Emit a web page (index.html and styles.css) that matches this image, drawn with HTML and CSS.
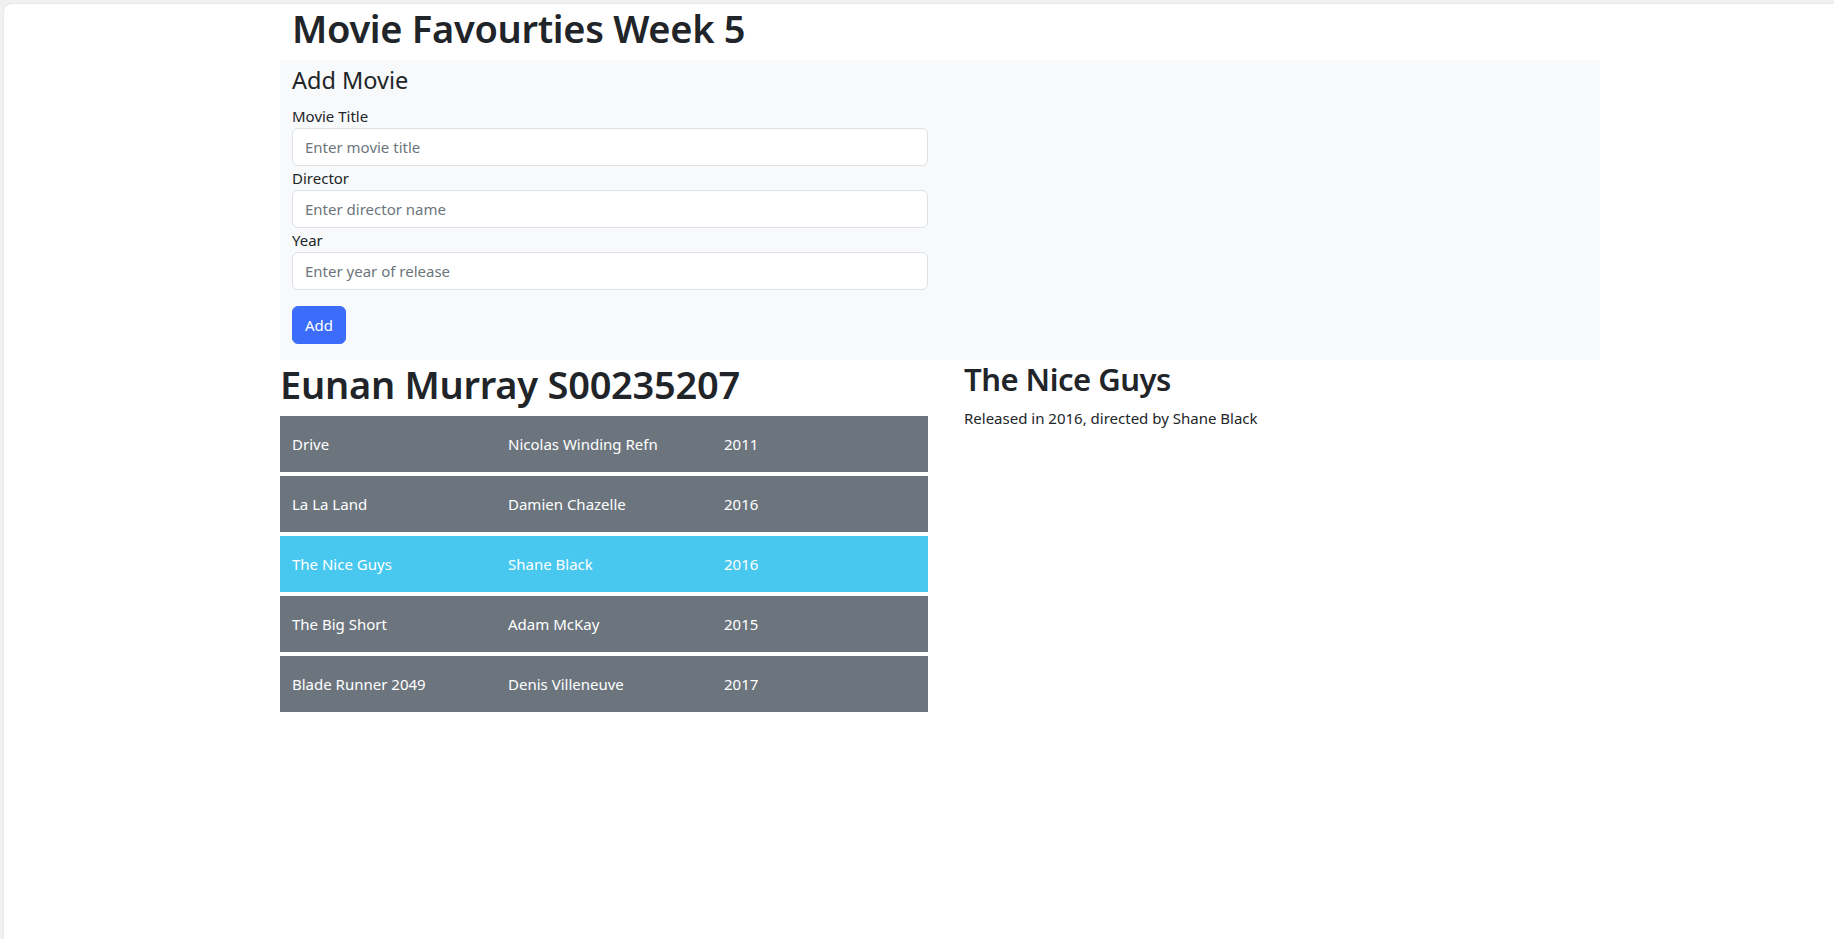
FILE: index.html
```html
<!DOCTYPE html>
<html lang="en">
<head>
<meta charset="utf-8">
<title>Movie Favourties Week 5</title>
<link rel="stylesheet" href="styles.css">
</head>
<body>
<div class="window">
  <div class="container">
    <h1 class="page-title">Movie Favourties Week 5</h1>
    <section class="add-panel">
      <div class="add-col">
        <h4 class="panel-title">Add Movie</h4>
        <form class="add-form">
          <label class="form-label" for="title">Movie Title</label>
          <input class="form-control" id="title" type="text" placeholder="Enter movie title">
          <label class="form-label" for="director">Director</label>
          <input class="form-control" id="director" type="text" placeholder="Enter director name">
          <label class="form-label" for="year">Year</label>
          <input class="form-control" id="year" type="text" placeholder="Enter year of release">
          <button class="btn-primary" type="button">Add</button>
        </form>
      </div>
    </section>
    <div class="lower">
      <div class="list-col">
        <h1 class="list-title">Eunan Murray S00235207</h1>
        <div class="movie-list">
          <div class="movie-row"><span class="cell">Drive</span><span class="cell">Nicolas Winding Refn</span><span class="cell">2011</span></div>
          <div class="movie-row"><span class="cell">La La Land</span><span class="cell">Damien Chazelle</span><span class="cell">2016</span></div>
          <div class="movie-row selected"><span class="cell">The Nice Guys</span><span class="cell">Shane Black</span><span class="cell">2016</span></div>
          <div class="movie-row"><span class="cell">The Big Short</span><span class="cell">Adam McKay</span><span class="cell">2015</span></div>
          <div class="movie-row"><span class="cell">Blade Runner 2049</span><span class="cell">Denis Villeneuve</span><span class="cell">2017</span></div>
        </div>
      </div>
      <div class="detail-col">
        <h2 class="detail-title">The Nice Guys</h2>
        <p class="detail-text">Released in 2016, directed by Shane Black</p>
      </div>
    </div>
  </div>
</div>
</body>
</html>
```

FILE: styles.css
```css
* { box-sizing: border-box; }

html, body {
  margin: 0;
  padding: 0;
  height: 100%;
}

body {
  background: #f1f1f1;
  font-family: "Noto Sans", "Open Sans", sans-serif;
  font-size: 15px;
  line-height: 24px;
  color: #212529;
  overflow: hidden;
}

.window {
  margin: 4px 0 0 4px;
  height: calc(100% - 4px);
  background: #ffffff;
  border-top-left-radius: 8px;
  box-shadow: 0 0 2px rgba(0, 0, 0, 0.12);
}

.container {
  width: 1320px;
  margin-left: 276px;
}

h1, h2, h4 {
  margin: 0;
  font-weight: 600;
}

.page-title {
  font-size: 38px;
  line-height: 48px;
  letter-spacing: -0.3px;
  padding-left: 12px;
  margin-bottom: 8px;
}

.add-panel {
  background: #f8f9fa;
  padding: 6px 12px 16px;
}

.add-col {
  width: 636px;
}

.panel-title {
  font-size: 23.5px;
  line-height: 28px;
  font-weight: 400;
  margin-bottom: 10px;
}

.add-form {
  display: flex;
  flex-direction: column;
  align-items: stretch;
}

.form-label {
  display: block;
  height: 24px;
}

.form-control {
  display: block;
  width: 100%;
  height: 38px;
  padding: 6px 12px;
  font: inherit;
  color: #212529;
  background: #fff;
  border: 1px solid #dee2e6;
  border-radius: 6px;
  outline: none;
}

.form-control::placeholder {
  color: #6c757d;
  opacity: 1;
}

.btn-primary {
  align-self: flex-start;
  margin-top: 16px;
  height: 38px;
  padding: 6px 12px;
  font: inherit;
  color: #fff;
  background: #3c6cfa;
  border: 1px solid #3c6cfa;
  border-radius: 6px;
}

.lower {
  display: grid;
  grid-template-columns: 660px 660px;
}

.list-col {
  padding-right: 12px;
}

.list-title {
  font-size: 38px;
  line-height: 48px;
  letter-spacing: -0.25px;
  margin-bottom: 8px;
}

.movie-list {
  display: flex;
  flex-direction: column;
  gap: 4px;
}

.movie-row {
  display: grid;
  grid-template-columns: repeat(3, 1fr);
  height: 56px;
  align-items: center;
  background: #6c757d;
  color: #fff;
}

.movie-row.selected {
  background: #48c8ef;
}

.cell {
  padding: 0 12px;
}

.detail-col {
  padding-left: 24px;
}

.detail-title {
  font-size: 31px;
  line-height: 38px;
  letter-spacing: -0.5px;
  margin-bottom: 8px;
}

.detail-text {
  margin: 0;
}
```
